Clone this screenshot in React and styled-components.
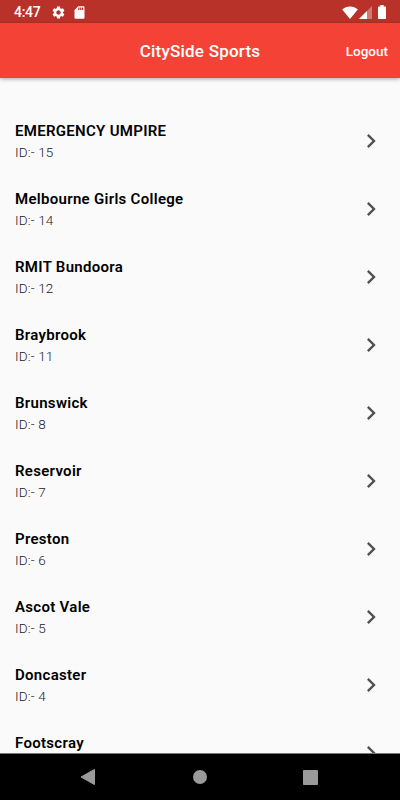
import React from 'react'
import styled, { createGlobalStyle } from 'styled-components'
import { MdSettings, MdSdCard, MdChevronRight } from 'react-icons/md'

const venues = [
  { id: 15, name: 'EMERGENCY UMPIRE' },
  { id: 14, name: 'Melbourne Girls College' },
  { id: 12, name: 'RMIT Bundoora' },
  { id: 11, name: 'Braybrook' },
  { id: 8, name: 'Brunswick' },
  { id: 7, name: 'Reservoir' },
  { id: 6, name: 'Preston' },
  { id: 5, name: 'Ascot Vale' },
  { id: 4, name: 'Doncaster' },
  { name: 'Footscray' },
]

function StatusBar() {
  return (
    <Status>
      <Clock>4:47</Clock>
      <Notifications>
        <MdSettings size={15} />
        <MdSdCard size={15} />
      </Notifications>
      <Signals>
        <svg width="16" height="13" viewBox="0 0 16 13">
          <path d="M0.2 3.4C4.4-.5 11.6-.5 15.8 3.4L8 13Z" fill="#fff" />
        </svg>
        <svg width="13" height="13" viewBox="0 0 13 13">
          <path d="M0 13L13 0V13Z" fill="#fff" fillOpacity="0.35" />
          <path d="M0 13L8 5V13Z" fill="#fff" />
        </svg>
        <svg width="8" height="14" viewBox="0 0 8 14">
          <path d="M2.3 0H5.7V1.4H7.2Q8 1.4 8 2.2V13.2Q8 14 7.2 14H.8Q0 14 0 13.2V2.2Q0 1.4 .8 1.4H2.3Z" fill="#fff" />
        </svg>
      </Signals>
    </Status>
  )
}

function App() {
  return (
    <>
      <GlobalStyle />
      <Screen>
        <StatusBar />
        <AppBar>
          <Title>CitySide Sports</Title>
          <Logout>Logout</Logout>
        </AppBar>
        <List>
          {venues.map((venue) => (
            <Row key={venue.name}>
              <Details>
                <Name>{venue.name}</Name>
                {venue.id && <Id>ID:- {venue.id}</Id>}
              </Details>
              <MdChevronRight size={28} />
            </Row>
          ))}
        </List>
        <NavBar>
          <svg width="16" height="18" viewBox="0 0 16 18">
            <path d="M14.5 1.4V16.6L1 9Z" fill="#9a9a9a" stroke="#9a9a9a" strokeLinejoin="round" />
          </svg>
          <svg width="14" height="14" viewBox="0 0 14 14">
            <circle cx="7" cy="7" r="7" fill="#9a9a9a" />
          </svg>
          <svg width="15" height="15" viewBox="0 0 15 15">
            <rect width="15" height="15" rx="0.8" fill="#9a9a9a" />
          </svg>
        </NavBar>
      </Screen>
    </>
  )
}

const GlobalStyle = createGlobalStyle`
  * {
    box-sizing: border-box;
  }
  body {
    margin: 0;
    font-family: Roboto, sans-serif;
    overflow: hidden;
  }
  svg {
    display: block;
    flex-shrink: 0;
  }
`
const Screen = styled.div`
  display: flex;
  flex-direction: column;
  width: 400px;
  height: 800px;
  overflow: hidden;
  background-color: #fafafa;
`
const Status = styled.div`
  display: flex;
  align-items: center;
  flex-shrink: 0;
  height: 23px;
  padding: 1px 14px 0;
  background-color: #b93229;
  color: #fff;
`
const Clock = styled.span`
  width: 36.5px;
  font-size: 14px;
  font-weight: 500;
  letter-spacing: -0.3px;
  line-height: 22px;
`
const Notifications = styled.div`
  display: flex;
  gap: 6px;
`
const Signals = styled.div`
  display: flex;
  align-items: center;
  margin-left: auto;
  svg:nth-child(2) {
    margin: 0 6px 0 1px;
  }
`
const AppBar = styled.header`
  display: grid;
  grid-template-columns: 1fr auto 1fr;
  align-items: center;
  flex-shrink: 0;
  height: 55px;
  padding: 0 12px;
  background-color: #f44336;
  color: #fff;
  box-shadow: 0 1px 4px rgba(0, 0, 0, 0.35);
`
const Title = styled.h1`
  grid-column: 2;
  margin: 0;
  font-size: 17px;
  font-weight: 500;
  letter-spacing: 0.22px;
  line-height: 20px;
`
const Logout = styled.span`
  justify-self: end;
  font-size: 13.5px;
  font-weight: 500;
  line-height: 18px;
`
const List = styled.div`
  flex: 1;
  min-height: 0;
  padding-top: 29px;
  overflow: hidden;
`
const Row = styled.div`
  display: flex;
  align-items: center;
  justify-content: space-between;
  height: 68px;
  padding: 0 15.5px 0 15px;
  color: #505050;
`
const Details = styled.div`
  height: 44px;
`
const Name = styled.div`
  color: #000;
  font-size: 15px;
  font-weight: 600;
  letter-spacing: 0.3px;
  line-height: 24px;
`
const Id = styled.div`
  color: #222;
  font-size: 13.5px;
  font-weight: 300;
  letter-spacing: 0.15px;
  line-height: 19px;
`
const NavBar = styled.nav`
  display: flex;
  align-items: center;
  justify-content: space-between;
  flex-shrink: 0;
  height: 47px;
  padding: 0 82px 0 80px;
  border-top: 1px solid #777;
  background-color: #000;
`
export default App
